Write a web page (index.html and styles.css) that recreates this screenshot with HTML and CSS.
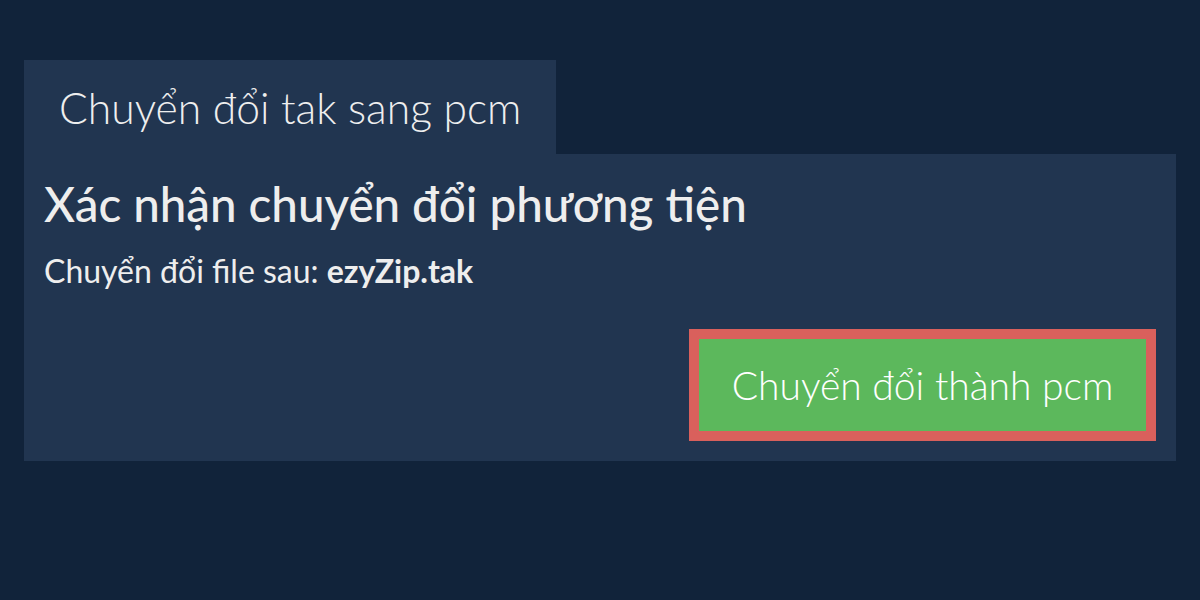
FILE: index.html
```html
<!DOCTYPE html>
<html lang="vi">
<head>
<meta charset="utf-8">
<title>Chuyển đổi tak sang pcm</title>
<link rel="stylesheet" href="styles.css">
</head>
<body>
<main class="wrap">
  <div class="tab">Chuyển đổi tak sang pcm</div>
  <section class="panel">
    <h1 class="title">Xác nhận chuyển đổi phương tiện</h1>
    <p class="sub">Chuyển đổi file sau: <strong>ezyZip.tak</strong></p>
    <div class="actions">
      <button class="btn">Chuyển đổi thành pcm</button>
    </div>
  </section>
</main>
</body>
</html>
```
FILE: styles.css
```css
html, body {
  margin: 0;
  padding: 0;
  background: #11233a;
  font-family: Lato, "Noto Sans", sans-serif;
  color: #eeeeee;
}
.wrap {
  padding: 60px 24px 0;
  display: flex;
  flex-direction: column;
  align-items: flex-start;
}
.tab {
  background: #213550;
  height: 94px;
  padding: 0 35px;
  display: flex;
  align-items: center;
  font-size: 42.6px;
  font-weight: 300;
  box-sizing: border-box;
}
.panel {
  align-self: stretch;
  background: #213550;
  padding: 21px 20px 20px;
}
.title {
  margin: 0;
  font-size: 47.5px;
  font-weight: 500;
  line-height: 1.2;
}
.sub {
  margin: 20px 0 0;
  font-size: 32px;
  font-weight: 400;
  line-height: 1.2;
}
.sub strong {
  font-weight: 700;
}
.actions {
  display: flex;
  justify-content: flex-end;
  margin-top: 39px;
}
.btn {
  background: #5cb85c;
  border: 10px solid #d9605c;
  color: #ffffff;
  font-family: Lato, "Noto Sans", sans-serif;
  font-size: 39px;
  font-weight: 300;
  width: 467px;
  height: 112px;
  padding: 0;
  cursor: pointer;
}
```
